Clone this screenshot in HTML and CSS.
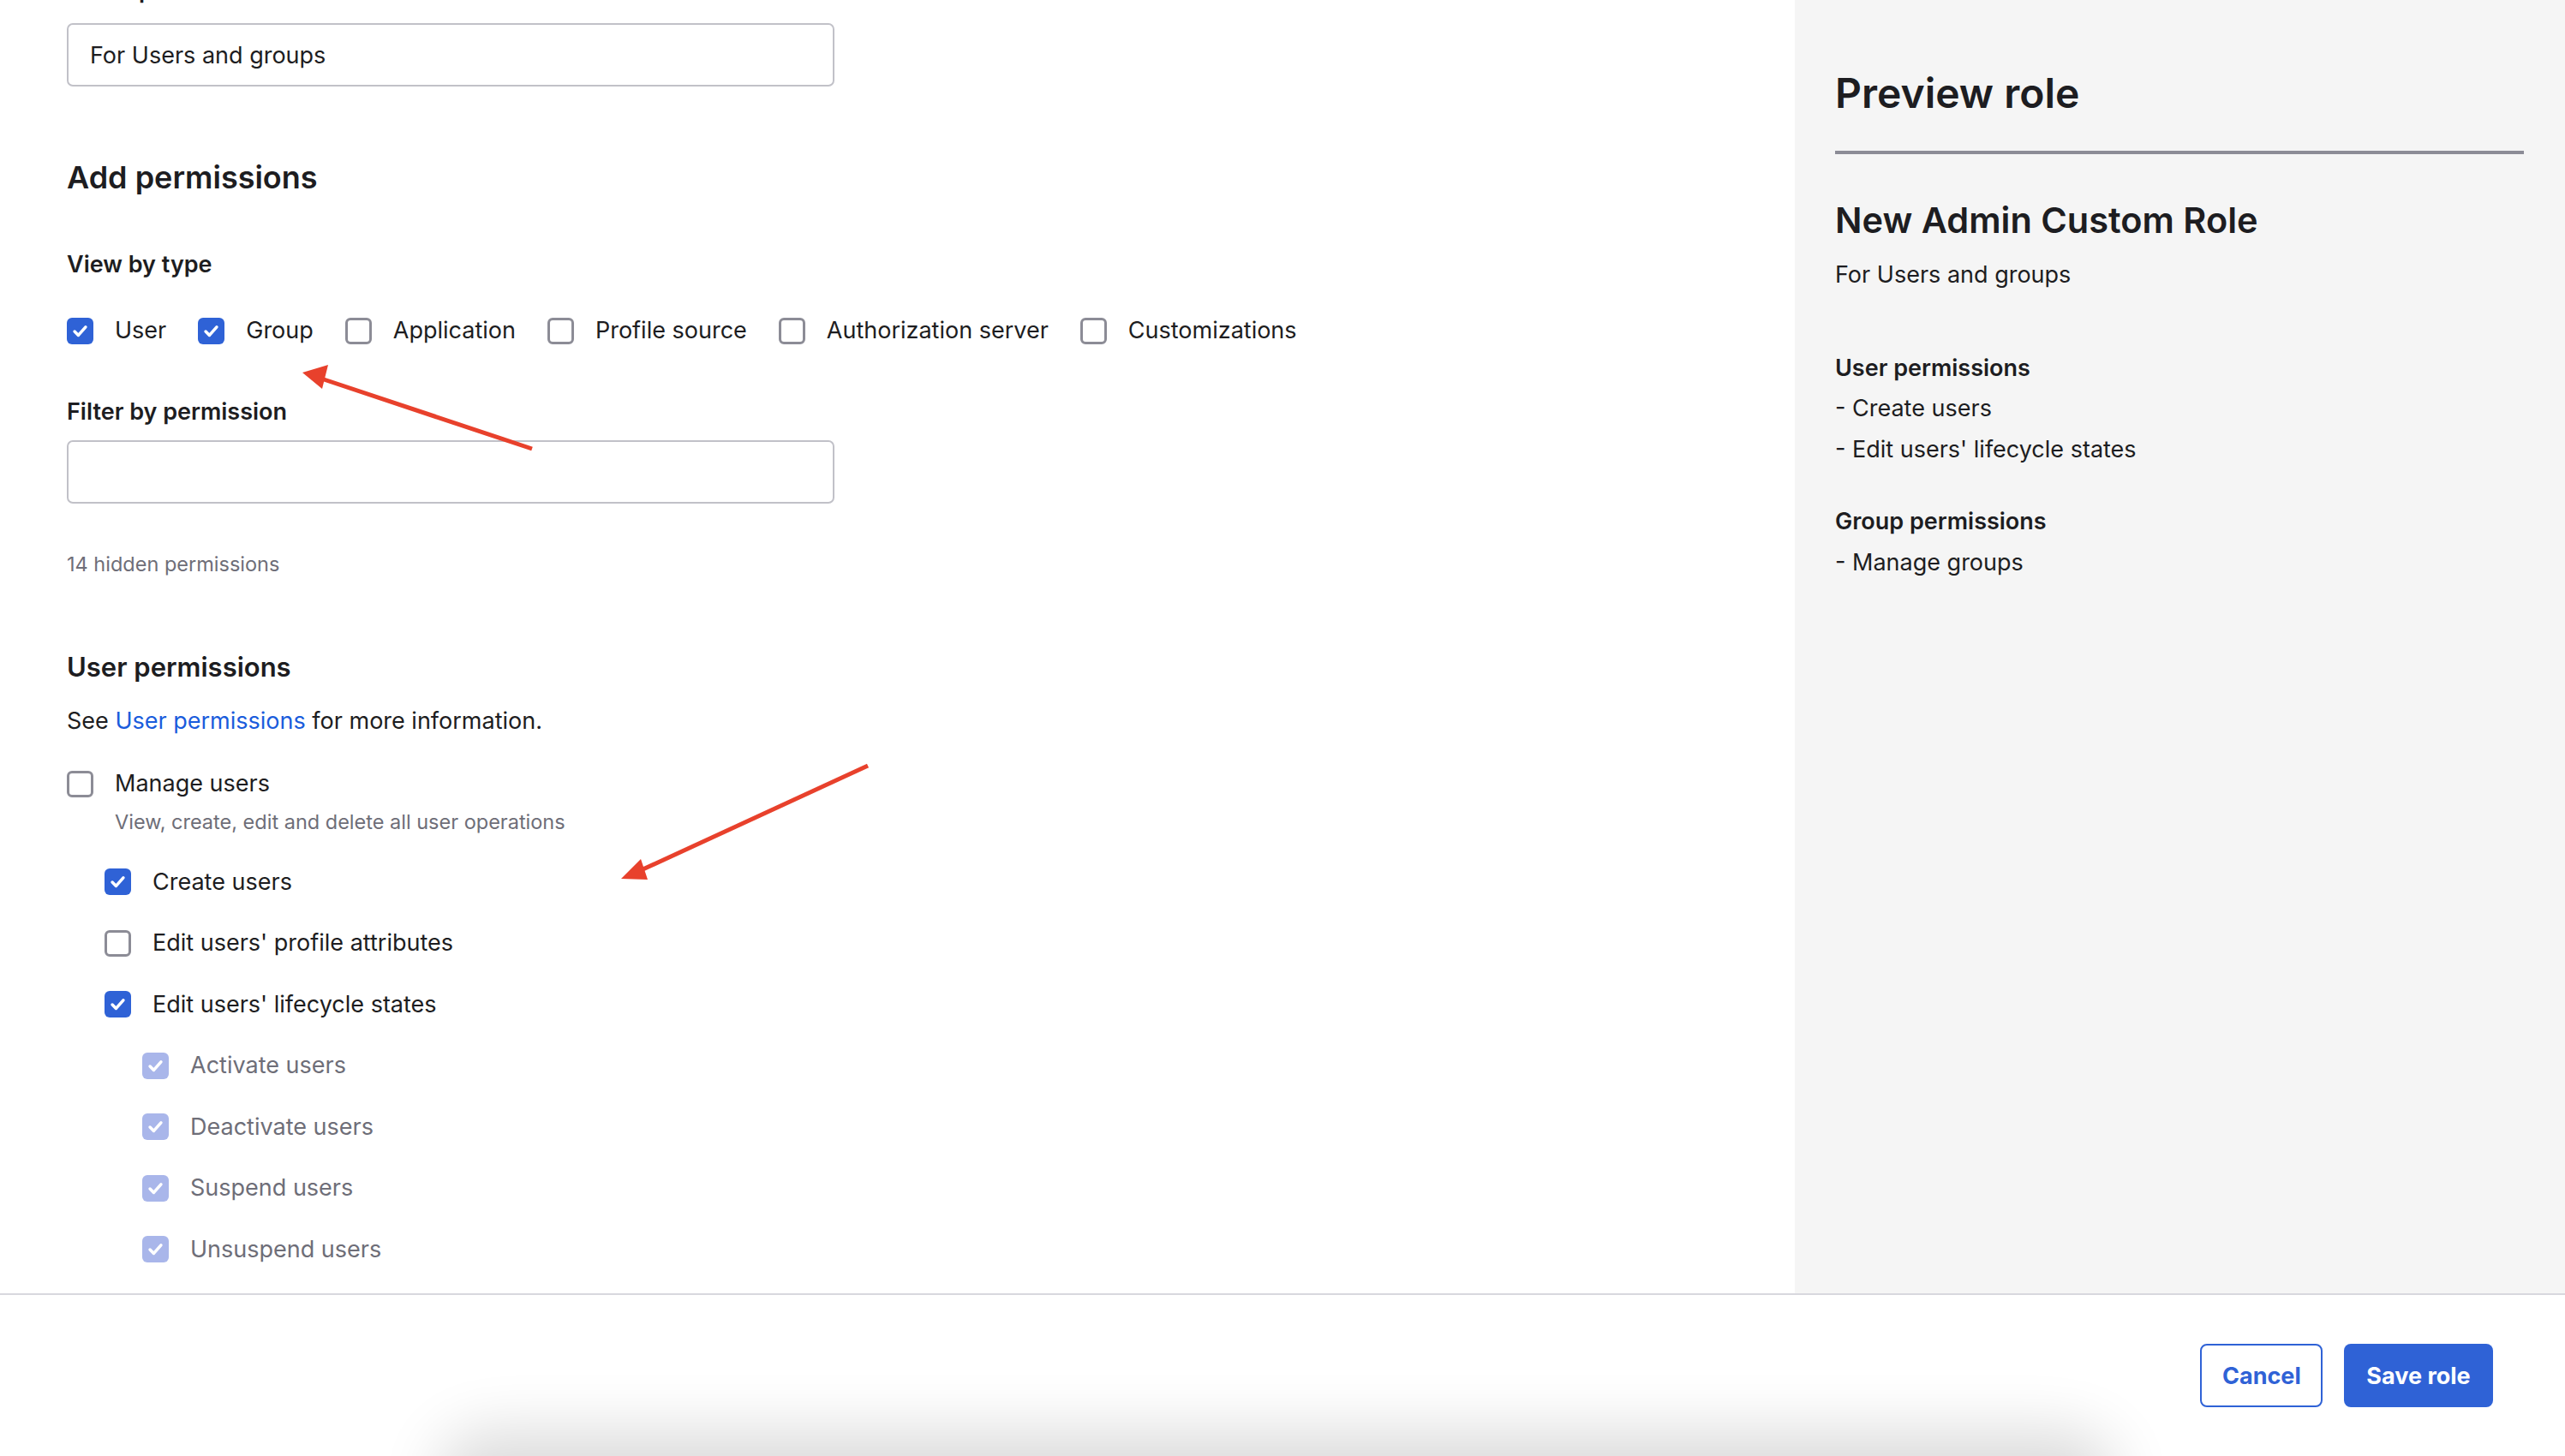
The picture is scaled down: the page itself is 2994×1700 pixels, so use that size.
FILE: index.html
```html
<!DOCTYPE html>
<html lang="en">
<head>
<meta charset="utf-8">
<title>Create role</title>
<link rel="stylesheet" href="styles.css">
</head>
<body>
<div class="app">
  <div class="top">
    <main class="main">
      <div class="main-inner">
        <div class="field-label cut">Description</div>
        <div class="input">For Users and groups</div>

        <h2 class="h-section">Add permissions</h2>
        <div class="field-label mt-view">View by type</div>
        <div class="type-row">
          <label class="opt"><span class="cb on"><svg viewBox="0 0 16 16"><path d="M4.2 8.3l2.6 2.6 5-5.6"/></svg></span><span>User</span></label>
          <label class="opt"><span class="cb on"><svg viewBox="0 0 16 16"><path d="M4.2 8.3l2.6 2.6 5-5.6"/></svg></span><span>Group</span></label>
          <label class="opt"><span class="cb"></span><span>Application</span></label>
          <label class="opt"><span class="cb"></span><span>Profile source</span></label>
          <label class="opt"><span class="cb"></span><span>Authorization server</span></label>
          <label class="opt"><span class="cb"></span><span>Customizations</span></label>
        </div>

        <div class="field-label mt-filter">Filter by permission</div>
        <div class="input filter"></div>
        <div class="hint">14 hidden permissions</div>

        <h2 class="h-sub">User permissions</h2>
        <p class="see">See <a href="#">User permissions</a> for more information.</p>

        <div class="perm-list">
          <div class="perm">
            <label class="opt"><span class="cb"></span><span>Manage users</span></label>
            <div class="perm-desc">View, create, edit and delete all user operations</div>
          </div>
          <label class="opt lvl1"><span class="cb on"><svg viewBox="0 0 16 16"><path d="M4.2 8.3l2.6 2.6 5-5.6"/></svg></span><span>Create users</span></label>
          <label class="opt lvl1"><span class="cb"></span><span>Edit users' profile attributes</span></label>
          <label class="opt lvl1"><span class="cb on"><svg viewBox="0 0 16 16"><path d="M4.2 8.3l2.6 2.6 5-5.6"/></svg></span><span>Edit users' lifecycle states</span></label>
          <label class="opt lvl2 dis"><span class="cb on"><svg viewBox="0 0 16 16"><path d="M4.2 8.3l2.6 2.6 5-5.6"/></svg></span><span>Activate users</span></label>
          <label class="opt lvl2 dis"><span class="cb on"><svg viewBox="0 0 16 16"><path d="M4.2 8.3l2.6 2.6 5-5.6"/></svg></span><span>Deactivate users</span></label>
          <label class="opt lvl2 dis"><span class="cb on"><svg viewBox="0 0 16 16"><path d="M4.2 8.3l2.6 2.6 5-5.6"/></svg></span><span>Suspend users</span></label>
          <label class="opt lvl2 dis"><span class="cb on"><svg viewBox="0 0 16 16"><path d="M4.2 8.3l2.6 2.6 5-5.6"/></svg></span><span>Unsuspend users</span></label>
        </div>
      </div>

      <svg class="annot" viewBox="0 0 1200 1200" width="1200" height="1200">
        <line x1="621" y1="524" x2="372" y2="441"/>
        <polygon points="353,435 383,426 376,454"/>
        <line x1="1013" y1="894" x2="746" y2="1017"/>
        <polygon points="725,1026 748,1003 756,1027"/>
      </svg>
    </main>

    <aside class="preview">
      <h1 class="pv-title">Preview role</h1>
      <div class="pv-rule"></div>
      <h2 class="pv-name">New Admin Custom Role</h2>
      <p class="pv-desc">For Users and groups</p>
      <div class="pv-head pv-h1">User permissions</div>
      <div class="pv-item first">- Create users</div>
      <div class="pv-item">- Edit users' lifecycle states</div>
      <div class="pv-head pv-h2">Group permissions</div>
      <div class="pv-item">- Manage groups</div>
    </aside>
  </div>

  <footer class="footer">
    <button class="btn btn-secondary">Cancel</button>
    <button class="btn btn-primary">Save role</button>
    <div class="bottom-shadow"></div>
  </footer>
</div>
</body>
</html>
```

FILE: styles.css
```css
* { box-sizing: border-box; }
html, body {
  margin: 0;
  padding: 0;
  width: 2994px;
  height: 1700px;
  overflow: hidden;
  background: #ffffff;
  font-family: Inter, "Noto Sans", "Liberation Sans", sans-serif;
  color: #1d1d21;
}
.app {
  display: grid;
  grid-template-rows: 1510px 190px;
  height: 1700px;
}
.top {
  display: flex;
  min-height: 0;
}
.main {
  flex: 1;
  position: relative;
  overflow: hidden;
  background: #ffffff;
}
.main-inner {
  padding-left: 78px;
  display: flex;
  flex-direction: column;
  align-items: flex-start;
}
.field-label {
  font-size: 27px;
  line-height: 36px;
  font-weight: 600;
}
.cut { margin-top: -29px; }
.input {
  margin-top: 20px;
  width: 896px;
  height: 74px;
  border: 2px solid #c1c1c8;
  border-radius: 7px;
  padding: 0 25px;
  font-size: 27px;
  line-height: 72px;
  color: #1d1d21;
}
.input.filter { margin-top: 15px; }
.h-section {
  margin: 84px 0 0;
  font-size: 36px;
  line-height: 44px;
  font-weight: 600;
}
.mt-view { margin-top: 62px; }
.mt-filter { margin-top: 59px; }
.type-row {
  margin-top: 41px;
  display: flex;
  gap: 37px;
}
.opt {
  display: flex;
  align-items: center;
  gap: 26px;
  height: 36px;
  font-size: 27px;
  line-height: 36px;
  white-space: nowrap;
}
.cb {
  width: 31px;
  height: 31px;
  flex: none;
  border: 3px solid #8c8c96;
  border-radius: 6px;
  background: #ffffff;
  display: flex;
  align-items: center;
  justify-content: center;
}
.opt > span:last-child { margin-left: -1px; }
.cb.on {
  border: none;
  background: #2f62d6;
}
.cb svg {
  width: 27px;
  height: 27px;
  fill: none;
  stroke: #ffffff;
  stroke-width: 2.1;
  stroke-linecap: round;
  stroke-linejoin: round;
}
.dis { color: #6e6e78; }
.dis .cb.on { background: #a9b6ea; }
.hint {
  margin-top: 55px;
  font-size: 23.5px;
  line-height: 32px;
  color: #6e6e78;
}
.h-sub {
  margin: 84px 0 0;
  font-size: 31px;
  line-height: 40px;
  font-weight: 600;
}
.see {
  margin: 25px 0 0;
  font-size: 27px;
  line-height: 36px;
}
.see a {
  color: #1a5cdc;
  text-decoration: none;
}
.perm-list {
  margin-top: 37px;
  display: flex;
  flex-direction: column;
  gap: 35.5px;
}
.perm-desc {
  margin-top: 11px;
  margin-left: 56px;
  font-size: 23.5px;
  line-height: 32px;
  color: #6e6e78;
}
.lvl1 { margin-left: 44px; }
.lvl2 { margin-left: 88px; }

.annot {
  position: absolute;
  left: 0;
  top: 0;
  pointer-events: none;
}
.annot line {
  stroke: #e8412c;
  stroke-width: 5;
}
.annot polygon { fill: #e8412c; }

.preview {
  width: 899px;
  flex: none;
  background: #f5f5f5;
  padding: 0 48px 0 47px;
}
.pv-title {
  margin: 80px 0 0;
  font-size: 48px;
  line-height: 58px;
  font-weight: 600;
}
.pv-rule {
  margin-top: 38px;
  height: 4px;
  background: #8c8c96;
}
.pv-name {
  margin: 52px 0 0;
  font-size: 41.5px;
  line-height: 50px;
  font-weight: 600;
}
.pv-desc {
  margin: 21px 0 0;
  font-size: 27px;
  line-height: 36px;
}
.pv-head {
  font-size: 27px;
  line-height: 36px;
  font-weight: 600;
}
.pv-h1 { margin-top: 73px; }
.pv-h2 { margin-top: 48px; }
.pv-item {
  margin-top: 12px;
  font-size: 27px;
  line-height: 36px;
}
.pv-item.first { margin-top: 11px; }

.footer {
  position: relative;
  border-top: 2px solid #d8d8de;
  background: #ffffff;
  display: flex;
  justify-content: flex-end;
  align-items: center;
  gap: 25px;
  padding-right: 84px;
  overflow: hidden;
}
.btn {
  height: 74px;
  border-radius: 8px;
  font-family: Inter, "Noto Sans", "Liberation Sans", sans-serif;
  font-size: 27px;
  font-weight: 700;
  padding: 0 24px;
  cursor: pointer;
}
.btn-secondary {
  width: 143px;
  background: #ffffff;
  color: #2f62d6;
  border: 2px solid #2f62d6;
}
.btn-primary {
  width: 174px;
  background: #2f62d6;
  color: #ffffff;
  border: none;
}
.bottom-shadow {
  position: absolute;
  left: 540px;
  width: 1900px;
  bottom: -60px;
  height: 60px;
  border-radius: 60px;
  box-shadow: 0 0 70px 30px rgba(0, 0, 0, 0.14);
  pointer-events: none;
}
```
